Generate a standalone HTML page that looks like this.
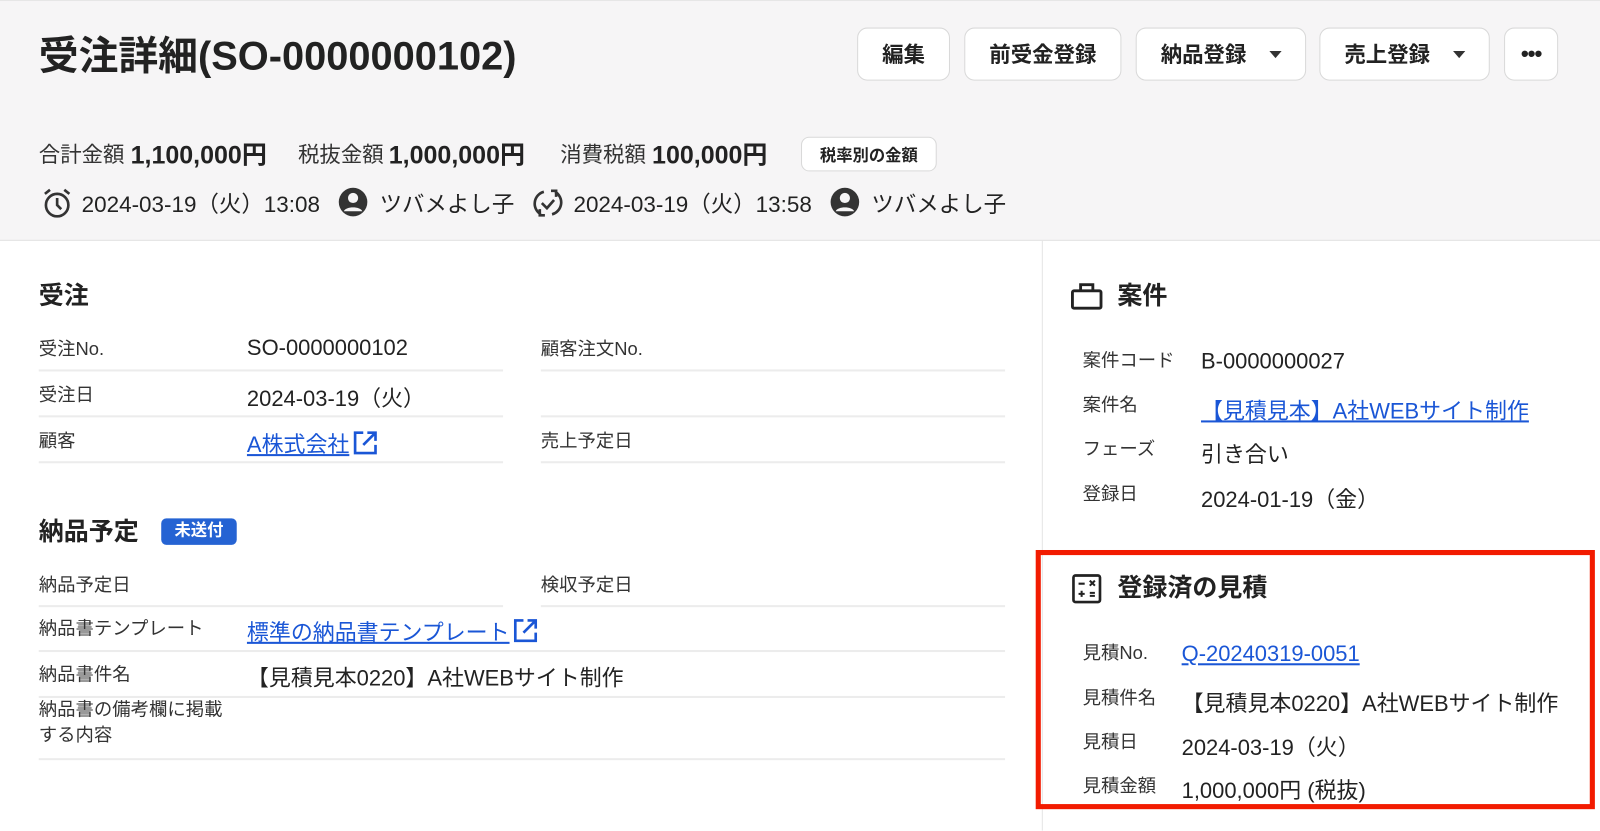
<!DOCTYPE html>
<html><head><meta charset="utf-8"><style>
*{box-sizing:border-box;margin:0;padding:0}
body{width:1600px;height:814px;overflow:hidden;background:#fff;font-family:"Liberation Sans","Noto Sans CJK JP",sans-serif;color:#222;position:relative}
#w{position:absolute;left:0;top:0;width:1568px;height:798px;transform:scale(1.0204);transform-origin:0 0}
.a{position:absolute;white-space:nowrap}
.hdr{position:absolute;left:0;top:0;width:1568px;height:236px;background:#f6f5f6;border-bottom:1px solid #e2e2e2;border-top:1px solid #e6e6e6}
.btn{position:absolute;top:27px;height:52px;background:#fff;border:1px solid #d9d9d9;border-radius:10px;font-size:21px;font-weight:bold;display:flex;align-items:center;justify-content:center;gap:22px;color:#222}
.tri{width:0;height:0;border-left:6px solid transparent;border-right:6px solid transparent;border-top:7px solid #333}
.lbl{font-size:18px;color:#333;margin-top:-3px}
.val{font-size:21.5px;color:#222;margin-top:1px}
.ln{position:absolute;height:2px;background:#ececec}
a{color:#1a56d6;text-decoration:underline}
.h{font-size:24.5px;font-weight:bold;margin-top:-3px}
.sl{font-size:21px;color:#333;margin-top:-3px}
.sv{font-size:24.5px;font-weight:bold;color:#222;margin-top:-3px}
.ic{display:inline-block;vertical-align:-4px;margin-left:3px}
.mt{margin-top:-2px}
</style></head><body><div id="w">
<div class="hdr"></div>
<div class="a" style="left:38px;top:24px;font-size:39px;font-weight:bold">受注詳細(SO-0000000102)</div>
<div class="btn" style="left:840px;width:91px">編集</div>
<div class="btn" style="left:945px;width:154px">前受金登録</div>
<div class="btn" style="left:1113px;width:167px">納品登録<span class="tri"></span></div>
<div class="btn" style="left:1293px;width:167px">売上登録<span class="tri"></span></div>
<div class="btn" style="left:1474px;width:53px;font-size:22px;letter-spacing:-1px">•••</div>

<div class="a sl" style="left:38px;top:139px">合計金額</div><div class="a sv" style="left:128px;top:136px">1,100,000円</div>
<div class="a sl" style="left:292px;top:139px">税抜金額</div><div class="a sv" style="left:381px;top:136px">1,000,000円</div>
<div class="a sl" style="left:549px;top:139px">消費税額</div><div class="a sv" style="left:639px;top:136px">100,000円</div>
<div class="a" style="left:785px;top:134px;width:133px;height:34px;background:#fff;border:1px solid #d9d9d9;border-radius:8px;font-size:16px;font-weight:bold;display:flex;align-items:center;justify-content:center">税率別の金額</div>

<svg class="a" style="left:40px;top:183px" width="32" height="32" viewBox="0 0 32 32" fill="none" stroke="#333" stroke-width="2.6"><circle cx="16" cy="18" r="11"/><path d="M16 11v7l4 4M4 7l5-4M28 7l-5-4"/></svg>
<div class="a val mt" style="left:80px;top:185px;font-size:22px">2024-03-19（火）13:08</div>
<svg class="a" style="left:331px;top:183px" width="30" height="30" viewBox="0 0 30 30"><circle cx="15" cy="15" r="14" fill="#333"/><circle cx="15" cy="11" r="5" fill="#f6f5f6"/><path d="M6 24c2-5 16-5 18 0" fill="#f6f5f6"/></svg>
<div class="a val mt" style="left:372px;top:185px;font-size:22px">ツバメよし子</div>
<svg class="a" style="left:521px;top:183px" width="32" height="32" viewBox="0 0 32 32" fill="none" stroke="#333" stroke-width="2.6"><path d="M9 27A12 12 0 0 1 12 5M23 5A12 12 0 0 1 20 27M8 22v6h5M24 10V4h-5M10 16l5 5 7-8"/></svg>
<div class="a val mt" style="left:562px;top:185px;font-size:22px">2024-03-19（火）13:58</div>
<svg class="a" style="left:813px;top:183px" width="30" height="30" viewBox="0 0 30 30"><circle cx="15" cy="15" r="14" fill="#333"/><circle cx="15" cy="11" r="5" fill="#f6f5f6"/><path d="M6 24c2-5 16-5 18 0" fill="#f6f5f6"/></svg>
<div class="a val mt" style="left:854px;top:185px;font-size:22px">ツバメよし子</div>

<div class="a" style="left:1021px;top:236px;width:1px;height:578px;background:#e5e5e5"></div>

<div class="a h" style="left:38px;top:274px">受注</div>
<div class="a lbl" style="left:38px;top:331px">受注No.</div><div class="a val" style="left:242px;top:328px">SO-0000000102</div>
<div class="a lbl" style="left:530px;top:331px">顧客注文No.</div>
<div class="ln" style="left:38px;top:362px;width:455px"></div><div class="ln" style="left:530px;top:362px;width:455px"></div>
<div class="a lbl" style="left:38px;top:376px">受注日</div><div class="a val" style="left:242px;top:373px">2024-03-19（火）</div>
<div class="ln" style="left:38px;top:407px;width:455px"></div><div class="ln" style="left:530px;top:407px;width:455px"></div>
<div class="a lbl" style="left:38px;top:421px">顧客</div><div class="a val" style="left:242px;top:418px"><a>A株式会社</a><svg class="ic" width="26" height="26" viewBox="0 0 26 26" fill="none" stroke="#1a56d6" stroke-width="2.6"><path d="M11 3H3v20h20v-8M15 3h8v8M23 3L11 15"/></svg></div>
<div class="a lbl" style="left:530px;top:421px">売上予定日</div>
<div class="ln" style="left:38px;top:452px;width:455px"></div><div class="ln" style="left:530px;top:452px;width:455px"></div>

<div class="a h" style="left:38px;top:505px">納品予定</div>
<div class="a" style="left:158px;top:508px;width:74px;height:26px;background:#2563d3;border-radius:5px;color:#fff;font-size:16px;font-weight:bold;text-align:center;line-height:26px">未送付</div>
<div class="a lbl" style="left:38px;top:562px">納品予定日</div><div class="a lbl" style="left:530px;top:562px">検収予定日</div>
<div class="ln" style="left:38px;top:593px;width:455px"></div><div class="ln" style="left:530px;top:593px;width:455px"></div>
<div class="a lbl" style="left:38px;top:605px">納品書テンプレート</div><div class="a val" style="left:242px;top:602px"><a>標準の納品書テンプレート</a><svg class="ic" width="26" height="26" viewBox="0 0 26 26" fill="none" stroke="#1a56d6" stroke-width="2.6"><path d="M11 3H3v20h20v-8M15 3h8v8M23 3L11 15"/></svg></div>
<div class="ln" style="left:38px;top:637px;width:947px"></div>
<div class="a lbl" style="left:38px;top:650px">納品書件名</div><div class="a val" style="left:242px;top:647px">【見積見本0220】A社WEBサイト制作</div>
<div class="ln" style="left:38px;top:682px;width:947px"></div>
<div class="a lbl" style="left:38px;top:686px;line-height:25px;white-space:normal;width:200px">納品書の備考欄に掲載<br>する内容</div>
<div class="ln" style="left:38px;top:743px;width:947px"></div>

<svg class="a" style="left:1049px;top:276px" width="32" height="28" viewBox="0 0 32 28" fill="none" stroke="#222" stroke-width="2.8"><rect x="2" y="9" width="28" height="17" rx="1.5"/><path d="M10 9V3h12v6"/></svg>
<div class="a h" style="left:1095px;top:274px">案件</div>
<div class="a lbl" style="left:1061px;top:342px">案件コード</div><div class="a val" style="left:1177px;top:341px">B-0000000027</div>
<div class="a lbl" style="left:1061px;top:386px">案件名</div><div class="a val" style="left:1177px;top:385px"><a>【見積見本】A社WEBサイト制作</a></div>
<div class="a lbl" style="left:1061px;top:429px">フェーズ</div><div class="a val" style="left:1177px;top:428px">引き合い</div>
<div class="a lbl" style="left:1061px;top:473px">登録日</div><div class="a val" style="left:1177px;top:472px">2024-01-19（金）</div>

<div class="a" style="left:1015px;top:539px;width:548px;height:254px;border:5px solid #f21b00"></div>
<svg class="a" style="left:1050px;top:562px" width="30" height="30" viewBox="0 0 30 30" fill="none" stroke="#222" stroke-width="2.6"><rect x="2" y="2" width="26" height="26" rx="2"/><path d="M7 10h6M18 7l5 5M23 7l-5 5M7 20h6M10 17v6M18 19h5M18 22h5" stroke-width="2"/></svg>
<div class="a h" style="left:1095px;top:560px">登録済の見積</div>
<div class="a lbl" style="left:1061px;top:629px">見積No.</div><div class="a val" style="left:1158px;top:628px"><a>Q-20240319-0051</a></div>
<div class="a lbl" style="left:1061px;top:673px">見積件名</div><div class="a val" style="left:1158px;top:672px">【見積見本0220】A社WEBサイト制作</div>
<div class="a lbl" style="left:1061px;top:716px">見積日</div><div class="a val" style="left:1158px;top:715px">2024-03-19（火）</div>
<div class="a lbl" style="left:1061px;top:759px">見積金額</div><div class="a val" style="left:1158px;top:757px">1,000,000円 (税抜)</div>
</div></body></html>
